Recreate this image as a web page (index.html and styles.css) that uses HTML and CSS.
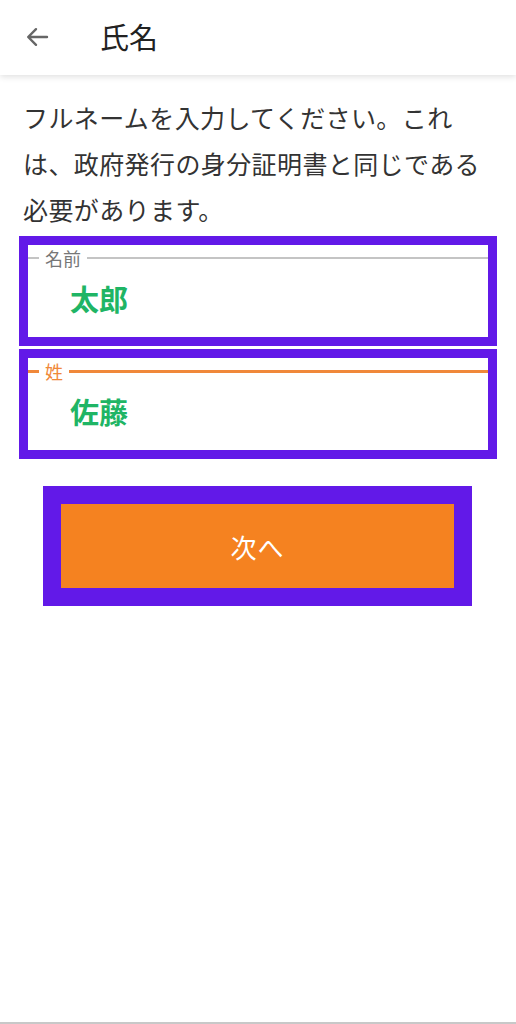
FILE: index.html
```html
<!DOCTYPE html>
<html lang="ja">
<head>
    <meta charset="UTF-8">
    <meta name="viewport" content="width=device-width, initial-scale=1.0">
    <title>氏名</title>
    <link rel="stylesheet" href="styles.css">
</head>
<body>
    <div class="page">
        <div class="header">
            <button class="back-btn" type="button" aria-label="戻る">
                <svg width="24" height="24" viewBox="0 0 24 24">
                    <path d="M22 12H3.5M11 4.2L3.2 12l7.8 7.8" fill="none" stroke="#666" stroke-width="2.4" stroke-linecap="round" stroke-linejoin="round"/>
                </svg>
            </button>
            <h1 class="title">氏名</h1>
        </div>

        <p class="intro">フルネームを入力してください。これ<br>は、政府発行の身分証明書と同じである<br>必要があります。</p>

        <div class="fields">
            <div class="field">
                <div class="field-inner">
                    <div class="legend">
                        <span class="line short"></span>
                        <span class="label">名前</span>
                        <span class="line"></span>
                    </div>
                    <div class="value">太郎</div>
                </div>
            </div>
            <div class="field focused">
                <div class="field-inner">
                    <div class="legend">
                        <span class="line short"></span>
                        <span class="label">姓</span>
                        <span class="line"></span>
                    </div>
                    <div class="value">佐藤</div>
                </div>
            </div>
        </div>

        <div class="next-wrap">
            <button class="next-btn" type="button">次へ</button>
        </div>

        <div class="spacer"></div>
        <div class="bottom-line"></div>
    </div>
</body>
</html>
```

FILE: styles.css
```css
* {
    margin: 0;
    padding: 0;
    box-sizing: border-box;
}
body {
    font-family: "Noto Sans CJK JP", "Noto Sans", sans-serif;
    background-color: #FFFFFF;
    color: #333333;
}
.page {
    display: flex;
    flex-direction: column;
    min-height: 100vh;
}
.header {
    height: 75px;
    display: flex;
    align-items: center;
    background-color: #FFFFFF;
    box-shadow: 0 2px 6px rgba(0, 0, 0, 0.12);
}
.back-btn {
    width: 24px;
    height: 24px;
    margin-left: 25px;
    margin-top: -2px;
    border: none;
    background: none;
    display: flex;
}
.title {
    margin-left: 51px;
    font-size: 29px;
    font-weight: 400;
    color: #222222;
    line-height: 1;
    margin-top: -2px;
}
.intro {
    margin-top: 19px;
    padding: 0 23px;
    font-size: 25px;
    letter-spacing: 0.4px;
    line-height: 46px;
    color: #333333;
}
.fields {
    margin: 4px 19px 0;
    display: flex;
    flex-direction: column;
    gap: 3px;
}
.field {
    border: 9px solid #6219E8;
    background-color: #FFFFFF;
}
.field-inner {
    height: 92px;
    padding-top: 4px;
}
.legend {
    display: flex;
    align-items: center;
    gap: 6px;
    height: 18px;
}
.line {
    flex: 1;
    height: 2px;
    background-color: #C4C4C4;
}
.line.short {
    flex: none;
    width: 11px;
}
.label {
    font-size: 18px;
    line-height: 18px;
    color: #777777;
}
.value {
    margin-top: 13px;
    padding-left: 42px;
    font-size: 29px;
    font-weight: 700;
    line-height: 36px;
    color: #1FB565;
}
.focused .line {
    height: 3px;
    background-color: #F0883A;
}
.focused .label {
    color: #F0883A;
}
.next-wrap {
    margin: 27px 44px 0 43px;
    border: 18px solid #6219E8;
}
.next-btn {
    display: block;
    width: 100%;
    height: 84px;
    border: none;
    background-color: #F58220;
    color: #FFFFFF;
    font-family: inherit;
    font-size: 26px;
    letter-spacing: 1px;
    cursor: pointer;
}
.spacer {
    flex: 1;
}
.bottom-line {
    height: 2px;
    background-color: #C8C8C8;
}
```
